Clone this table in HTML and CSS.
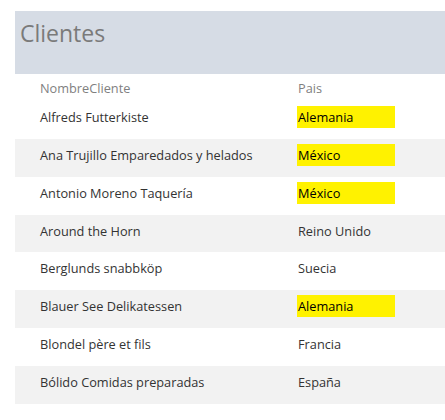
FILE: index.html
```html
<!DOCTYPE html>
<html lang="es">
<head>
<meta charset="utf-8">
<title>Clientes</title>
<link rel="stylesheet" href="styles.css">
</head>
<body>
<div class="page">
  <div class="header"><h1 class="title">Clientes</h1></div>
  <div class="table">
    <div class="row head">
      <div class="cell name">NombreCliente</div>
      <div class="cell country">Pais</div>
    </div>
    <div class="row">
      <div class="cell name">Alfreds Futterkiste</div>
      <div class="cell country hl">Alemania</div>
    </div>
    <div class="row alt">
      <div class="cell name">Ana Trujillo Emparedados y helados</div>
      <div class="cell country hl">México</div>
    </div>
    <div class="row">
      <div class="cell name">Antonio Moreno Taquería</div>
      <div class="cell country hl">México</div>
    </div>
    <div class="row alt">
      <div class="cell name">Around the Horn</div>
      <div class="cell country">Reino Unido</div>
    </div>
    <div class="row">
      <div class="cell name">Berglunds snabbköp</div>
      <div class="cell country">Suecia</div>
    </div>
    <div class="row alt">
      <div class="cell name">Blauer See Delikatessen</div>
      <div class="cell country hl">Alemania</div>
    </div>
    <div class="row">
      <div class="cell name">Blondel père et fils</div>
      <div class="cell country">Francia</div>
    </div>
    <div class="row alt">
      <div class="cell name">Bólido Comidas preparadas</div>
      <div class="cell country">España</div>
    </div>
  </div>
</div>
</body>
</html>
```
FILE: styles.css
```css
html, body {
  margin: 0;
  padding: 0;
  background: #ffffff;
}
body {
  font-family: "Open Sans", "Liberation Sans", sans-serif;
  color: #333333;
}
.page {
  padding-top: 11px;
  padding-left: 15px;
}
.header {
  height: 63px;
  background: #d6dce5;
  padding-left: 5px;
  box-sizing: border-box;
}
.title {
  margin: 0;
  font-weight: 400;
  font-size: 23px;
  line-height: 44px;
  color: #7a7a7a;
}
.row {
  display: grid;
  grid-template-columns: 257px 98px 1fr;
  padding-left: 25px;
  height: 37.86px;
  box-sizing: border-box;
  padding-top: 5px;
  font-size: 12.75px;
}
.row.head {
  height: 27px;
  padding-top: 3px;
  color: #7f7f7f;
}
.row.alt {
  background: #f2f2f2;
}
.cell {
  height: 22px;
  line-height: 22px;
  white-space: nowrap;
}
.country {
  padding-left: 1px;
}
.hl {
  background: #fff200;
  color: #000;
}
```
